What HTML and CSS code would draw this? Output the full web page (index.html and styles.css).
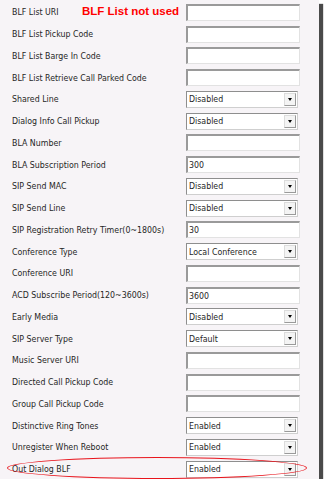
FILE: index.html
```html
<!DOCTYPE html>
<html lang="en">
<head>
  <meta charset="UTF-8">
  <title>Account Advanced Settings</title>
  <link rel="stylesheet" href="styles.css">
</head>
<body>
  <div class="panel">
    <div class="row">
      <span class="label">BLF List URI</span>
      <span class="note">BLF List not used</span>
      <input class="field" type="text">
    </div>
    <div class="row">
      <span class="label">BLF List Pickup Code</span>
      <input class="field" type="text">
    </div>
    <div class="row">
      <span class="label">BLF List Barge In Code</span>
      <input class="field" type="text">
    </div>
    <div class="row">
      <span class="label">BLF List Retrieve Call Parked Code</span>
      <input class="field" type="text">
    </div>
    <div class="row">
      <span class="label">Shared Line</span>
      <div class="select"><span>Disabled</span><span class="arrow"></span></div>
    </div>
    <div class="row">
      <span class="label">Dialog Info Call Pickup</span>
      <div class="select"><span>Disabled</span><span class="arrow"></span></div>
    </div>
    <div class="row">
      <span class="label">BLA Number</span>
      <input class="field" type="text">
    </div>
    <div class="row">
      <span class="label">BLA Subscription Period</span>
      <input class="field" type="text" value="300">
    </div>
    <div class="row">
      <span class="label">SIP Send MAC</span>
      <div class="select"><span>Disabled</span><span class="arrow"></span></div>
    </div>
    <div class="row">
      <span class="label">SIP Send Line</span>
      <div class="select"><span>Disabled</span><span class="arrow"></span></div>
    </div>
    <div class="row">
      <span class="label">SIP Registration Retry Timer(0~1800s)</span>
      <input class="field" type="text" value="30">
    </div>
    <div class="row">
      <span class="label">Conference Type</span>
      <div class="select"><span>Local Conference</span><span class="arrow"></span></div>
    </div>
    <div class="row">
      <span class="label">Conference URI</span>
      <input class="field" type="text">
    </div>
    <div class="row">
      <span class="label">ACD Subscribe Period(120~3600s)</span>
      <input class="field" type="text" value="3600">
    </div>
    <div class="row">
      <span class="label">Early Media</span>
      <div class="select"><span>Disabled</span><span class="arrow"></span></div>
    </div>
    <div class="row">
      <span class="label">SIP Server Type</span>
      <div class="select"><span>Default</span><span class="arrow"></span></div>
    </div>
    <div class="row">
      <span class="label">Music Server URI</span>
      <input class="field" type="text">
    </div>
    <div class="row">
      <span class="label">Directed Call Pickup Code</span>
      <input class="field" type="text">
    </div>
    <div class="row">
      <span class="label">Group Call Pickup Code</span>
      <input class="field" type="text">
    </div>
    <div class="row">
      <span class="label">Distinctive Ring Tones</span>
      <div class="select"><span>Enabled</span><span class="arrow"></span></div>
    </div>
    <div class="row">
      <span class="label">Unregister When Reboot</span>
      <div class="select"><span>Enabled</span><span class="arrow"></span></div>
    </div>
    <div class="row marked">
      <span class="label">Out Dialog BLF</span>
      <div class="select"><span>Enabled</span><span class="arrow"></span></div>
      <span class="ring"></span>
    </div>
  </div>
</body>
</html>
```

FILE: styles.css
```css
body {
  margin: 0;
  background: #ffffff;
  font-family: "DejaVu Sans Condensed", "DejaVu Sans", sans-serif;
}

.panel {
  width: 307px;
  height: 477.5px;
  padding: 1.5px 0 0 12px;
  background-color: #f7f4f7;
  box-shadow: 4px 4px 1px #4a4a4a;
}

.row {
  position: relative;
  display: flex;
  align-items: center;
  height: 21.75px;
}

.label {
  width: 174px;
  flex-shrink: 0;
  font-size: 8.75px;
  color: #262626;
  white-space: nowrap;
}

.note {
  position: absolute;
  left: 70px;
  top: 3px;
  font-family: "Liberation Sans", Arial, sans-serif;
  font-size: 11.5px;
  font-weight: bold;
  color: #ff0000;
}

.field {
  box-sizing: border-box;
  width: 114px;
  height: 17px;
  margin: 0;
  padding: 0 1px;
  border-style: solid;
  border-width: 2px 1px 1px 2px;
  border-color: #9a9a9a #e2e2e2 #e2e2e2 #9a9a9a;
  background: #ffffff;
  font-family: inherit;
  font-size: 8.75px;
  color: #262626;
  outline: none;
}

.select {
  box-sizing: border-box;
  display: flex;
  align-items: center;
  justify-content: space-between;
  width: 112px;
  height: 17px;
  padding: 0 1px 0 2px;
  border: 1px solid #8e8e8e;
  border-right-color: #cfcfcf;
  border-bottom-color: #cfcfcf;
  background: #ffffff;
  font-size: 8.75px;
  color: #262626;
}

.arrow {
  position: relative;
  box-sizing: border-box;
  width: 12px;
  height: 13px;
  border: 1px solid #dcdcdc;
  border-right-color: #9a9a9a;
  border-bottom-color: #9a9a9a;
  background: #f4f4f4;
}

.arrow::after {
  content: "";
  position: absolute;
  left: 3px;
  top: 4px;
  border-left: 2.5px solid transparent;
  border-right: 2.5px solid transparent;
  border-top: 3px solid #000000;
}

.ring {
  position: absolute;
  left: -5px;
  top: -1px;
  width: 298px;
  height: 20px;
  border: 1.5px solid #e8141c;
  border-radius: 50%;
  pointer-events: none;
}
```
